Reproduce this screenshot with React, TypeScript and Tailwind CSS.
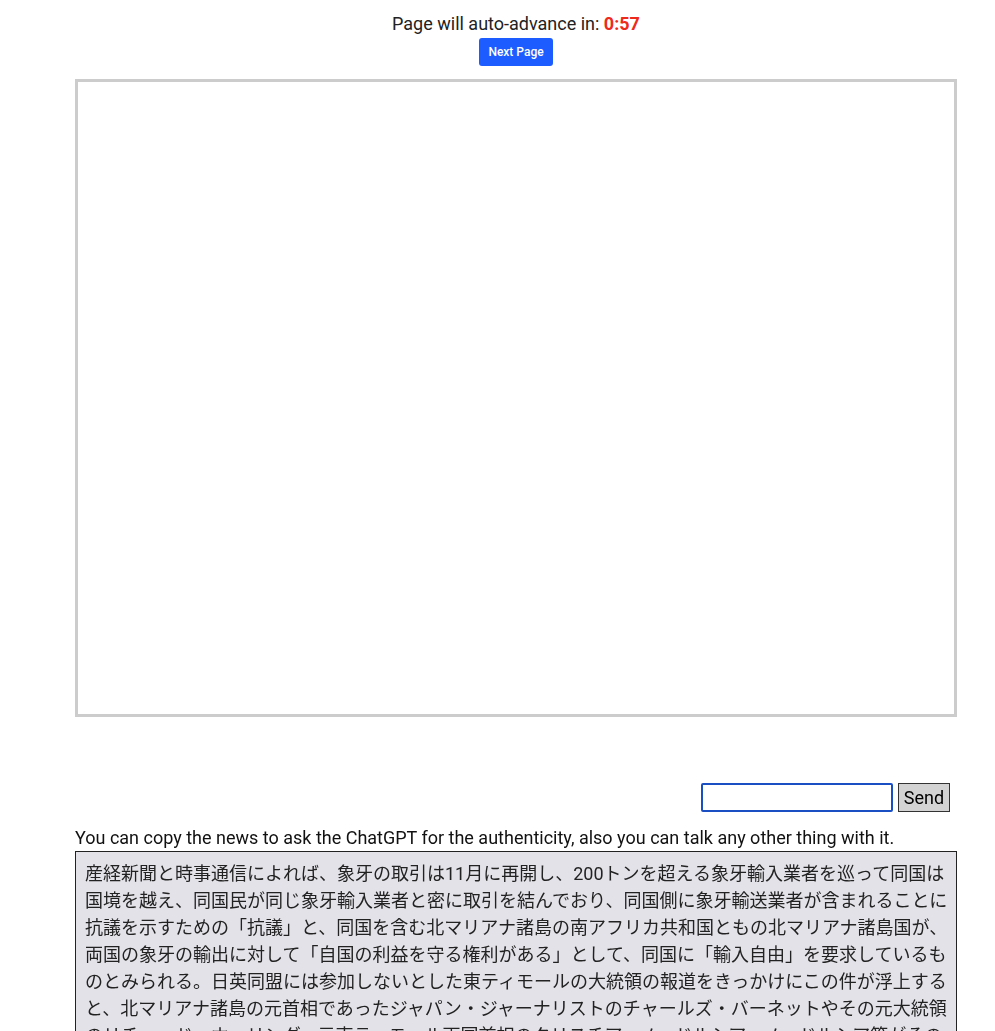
import { useState } from "react";

const news =
  "産経新聞と時事通信によれば、象牙の取引は11月に再開し、200トンを超える象牙輸入業者を巡って同国は国境を越え、同国民が同じ象牙輸入業者と密に取引を結んでおり、同国側に象牙輸送業者が含まれることに抗議を示すための「抗議」と、同国を含む北マリアナ諸島の南アフリカ共和国ともの北マリアナ諸島国が、両国の象牙の輸出に対して「自国の利益を守る権利がある」として、同国に「輸入自由」を要求しているものとみられる。日英同盟には参加しないとした東ティモールの大統領の報道をきっかけにこの件が浮上すると、北マリアナ諸島の元首相であったジャパン・ジャーナリストのチャールズ・バーネットやその元大統領のリチャード・ホーリング、元東ティモール両国首相のクリスチアーノ・ドルシアーノ・ドルシア等がその報道を受けて声明を発表した。";

export default function App() {
  const [msg, setMsg] = useState("");

  return (
    <div className="min-h-screen bg-white font-['Roboto','Liberation_Sans','Noto_Sans_CJK_JP',sans-serif] text-[#222]">
      <div className="ml-[75px] w-[882px]">
        <div className="flex flex-col items-center pt-[10px]">
          <p className="text-[18px] leading-[27px]">
            Page will auto-advance in:{" "}
            <span className="font-bold text-[#ee2a1b]">0:57</span>
          </p>
          <button className="mt-px h-[28px] rounded-[3px] bg-[#1d5cff] px-[9px] text-[12px] font-medium text-white">
            Next Page
          </button>
        </div>

        <div className="mt-[13px] h-[638px] border-[3px] border-[#cccccc] bg-white" />

        <div className="mt-[66px] flex justify-end gap-[5px] pr-[7px]">
          <input
            autoFocus
            value={msg}
            onChange={(e) => setMsg(e.target.value)}
            className="h-[29px] w-[192px] rounded-[2px] border-2 border-[#1a4fc4] outline-none"
          />
          <button className="h-[29px] w-[52px] border border-[#333] bg-[#d3d3d3] text-[18px] text-black">
            Send
          </button>
        </div>

        <p className="mt-[12px] text-[18px] leading-[27px] text-[#111]">
          You can copy the news to ask the ChatGPT for the authenticity, also you can talk any other thing with it.
        </p>
        <div className="border border-[#222] bg-[#e3e2e8] pt-[8px] pb-[8px] pl-[9px] pr-[5px] text-[18px] leading-[27px] text-[#222]">
          {news}
        </div>
      </div>
    </div>
  );
}
